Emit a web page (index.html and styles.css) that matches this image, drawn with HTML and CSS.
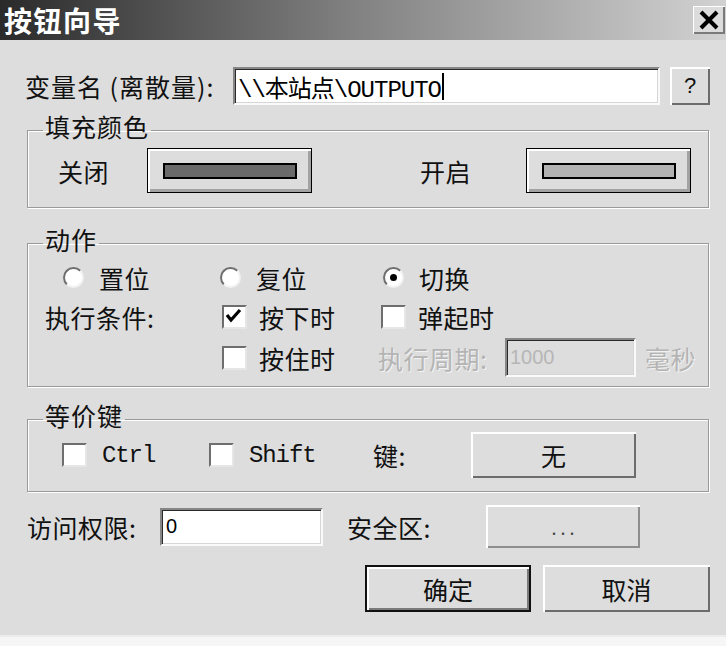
FILE: index.html
```html
<!DOCTYPE html>
<html lang="zh-CN">
<head>
<meta charset="utf-8">
<title>按钮向导</title>
<link rel="stylesheet" href="styles.css">
</head>
<body>
<div class="dialog">
  <div class="titlebar">
    <span class="title">按钮向导</span>
    <button class="close" aria-label="关闭">
      <svg width="32" height="28" viewBox="0 0 32 28"><path d="M8 6 L24 22 M24 6 L8 22" stroke="#000" stroke-width="4" fill="none"/></svg>
    </button>
  </div>

  <div class="content">
    <div class="var-row">
      <span class="lbl var-lbl">变量名 (离散量):</span>
      <div class="field var-field">\\本站点\OUTPUTO<span class="caret"></span></div>
      <button class="btn help">?</button>
    </div>

    <fieldset class="group">
      <legend>填充颜色</legend>
      <div class="fill-row">
        <span class="lbl off-lbl">关闭</span>
        <button class="swatch-btn"><span class="swatch dark"></span></button>
        <span class="lbl on-lbl">开启</span>
        <button class="swatch-btn"><span class="swatch light"></span></button>
      </div>
    </fieldset>

    <fieldset class="group g-action">
      <legend>动作</legend>
      <div class="action-grid">
        <span class="opt ml18"><span class="radio"></span><span class="lbl">置位</span></span>
        <span class="opt"><span class="radio"></span><span class="lbl">复位</span></span>
        <span class="opt span3 ml5"><span class="radio on"><span class="dot"></span></span><span class="lbl">切换</span></span>

        <span class="lbl">执行条件:</span>
        <span class="opt ml2"><span class="chk"><svg width="21" height="20" viewBox="0 0 21 20"><polyline points="3,8 7,13 16,3" stroke="#000" stroke-width="3.2" fill="none"/></svg></span><span class="lbl">按下时</span></span>
        <span class="opt span3 ml3"><span class="chk"></span><span class="lbl">弹起时</span></span>

        <span></span>
        <span class="opt ml2"><span class="chk"></span><span class="lbl">按住时</span></span>
        <span class="lbl disabled">执行周期:</span>
        <div class="field period">1000</div>
        <span class="lbl disabled">毫秒</span>
      </div>
    </fieldset>

    <fieldset class="group g-keys">
      <legend>等价键</legend>
      <div class="key-row">
        <span class="opt key-ctrl"><span class="chk"></span><span class="mono">Ctrl</span></span>
        <span class="opt key-shift"><span class="chk"></span><span class="mono">Shift</span></span>
        <span class="lbl key-lbl">键:</span>
        <button class="btn key-btn">无</button>
      </div>
    </fieldset>

    <div class="access-row">
      <span class="lbl access-lbl">访问权限:</span>
      <div class="field access-field">0</div>
      <span class="lbl zone-lbl">安全区:</span>
      <button class="btn zone-btn">. . .</button>
    </div>

    <div class="actions">
      <button class="btn default">确定</button>
      <button class="btn cancel">取消</button>
    </div>
  </div>
</div>
</body>
</html>
```

FILE: styles.css
```css
html, body {
  margin: 0;
  padding: 0;
  background: #f6f6f6;
}
body {
  width: 726px;
  height: 646px;
  overflow: hidden;
  font-family: "Noto Sans CJK SC", sans-serif;
  color: #111;
}
.dialog {
  height: 635px;
  border-bottom: 2px solid #ececec;
  background: #dddddd;
}
.titlebar {
  height: 40px;
  display: flex;
  align-items: center;
  justify-content: space-between;
  background: linear-gradient(to right, #2a2a2a 0%, #808080 48%, #d2d2d2 100%);
}
.title {
  color: #fff;
  font-size: 28px;
  font-weight: 700;
  letter-spacing: 1.5px;
  line-height: 40px;
  padding-left: 4px;
}
.close {
  width: 32px;
  height: 28px;
  margin-right: 1px;
  padding: 0;
  border: none;
  background: #dcdcdc;
  box-shadow: inset 1px 1px 0 #fff, inset -2px -2px 0 #7a7a7a;
  display: flex;
}
.content {
  padding: 27px 16px 0 25px;
}
.lbl {
  font-size: 25px;
  line-height: 26px;
  white-space: nowrap;
  letter-spacing: 0.5px;
}
.disabled {
  color: #b4b4b4;
  text-shadow: 1px 1px 0 #f2f2f2;
}
.field {
  box-sizing: border-box;
  background: #fff;
  border: 2px solid;
  border-color: #868686 #fafafa #fafafa #868686;
  box-shadow: inset 1px 1px 0 #2a2a2a, inset -1px -1px 0 #d6d6d6;
  display: flex;
  align-items: center;
  padding-left: 4px;
}
.btn {
  box-sizing: border-box;
  padding: 0;
  border: none;
  background: #dddddd;
  box-shadow: inset 2px 2px 0 #fff, inset -2px -2px 0 #6c6c6c;
  font-family: "Noto Sans CJK SC", sans-serif;
  font-size: 25px;
  color: #111;
}

/* row 1 */
.var-row {
  display: flex;
  align-items: center;
  height: 38px;
}
.var-lbl {
  width: 208px;
  letter-spacing: 1px;
}
.var-field {
  width: 427px;
  height: 38px;
  font-family: "Liberation Mono", "Noto Sans CJK SC", monospace;
  font-size: 24px;
  letter-spacing: -1px;
  padding-left: 3px;
  color: #000;
}
.caret {
  display: inline-block;
  width: 2px;
  height: 27px;
  background: #000;
  margin-left: 1px;
}
.help {
  width: 40px;
  height: 38px;
  margin-left: 10px;
  font-family: "Liberation Sans", sans-serif;
  font-size: 22px;
}

/* group boxes */
.group {
  margin: 8px 1px 0 2px;
  padding: 0;
  min-width: 0;
  border: 1px solid #9a9a9a;
  box-shadow: 1px 1px 0 #fff, inset 1px 1px 0 #fff;
}
.group legend {
  margin-left: 15px;
  padding: 0 2px 8px;
  font-size: 25px;
  line-height: 26px;
  letter-spacing: 1px;
}
.fill-row {
  display: flex;
  align-items: center;
  height: 45px;
  margin: 1px 0 14px;
  padding-left: 30px;
}
.off-lbl {
  width: 89px;
}
.on-lbl {
  width: 106px;
  margin-left: 108px;
}
.swatch-btn {
  box-sizing: border-box;
  width: 165px;
  height: 45px;
  padding: 0;
  background: #dddddd;
  border: 1px solid #000;
  box-shadow: inset 2px 2px 0 #fff, inset -3px -3px 0 #a2a2a2;
  display: flex;
  align-items: center;
  justify-content: center;
}
.swatch {
  box-sizing: border-box;
  display: block;
  width: 134px;
  height: 16px;
  border: 2px solid #000;
}
.swatch.dark { background: #6a6a6a; }
.swatch.light { background: #b2b2b2; }

/* action group */
.g-action {
  margin-top: 18px;
}
.action-grid {
  display: grid;
  grid-template-columns: 175px 158px 127px 140px auto;
  grid-template-rows: 35px 43px 39px;
  align-items: center;
  padding-left: 17px;
  margin-bottom: 9px;
}
.opt {
  display: flex;
  align-items: center;
}
.span3 { grid-column: span 3; }
.ml18 { margin-left: 18px; }
.ml5 { margin-left: 5px; }
.ml3 { margin-left: 3px; }
.ml2 { margin-left: 2px; }
.radio {
  box-sizing: border-box;
  width: 21px;
  height: 21px;
  border-radius: 50%;
  background: #fff;
  border: 2px solid;
  border-color: #6e6e6e #f2f2f2 #f2f2f2 #6e6e6e;
  display: flex;
  align-items: center;
  justify-content: center;
  margin-right: 15px;
}
.dot {
  width: 7px;
  height: 7px;
  border-radius: 50%;
  background: #000;
}
.chk {
  box-sizing: border-box;
  width: 25px;
  height: 24px;
  background: #fff;
  border: 2px solid;
  border-color: #6e6e6e #e6e6e6 #e6e6e6 #6e6e6e;
  margin-right: 12px;
  display: flex;
}
.period {
  width: 131px;
  height: 39px;
  background: #dddddd;
  font-family: "Liberation Sans", sans-serif;
  font-size: 20px;
  color: #b6b6b6;
  padding-left: 3px;
}

/* keys group */
.g-keys {
  margin-top: 15px;
}
.key-row {
  display: flex;
  align-items: center;
  height: 46px;
  margin: -4px 0 13px;
  padding-left: 34px;
}
.key-row .chk {
  margin-right: 15px;
}
.key-ctrl { width: 147px; }
.key-shift { width: 164px; }
.mono {
  font-family: "Liberation Mono", monospace;
  font-size: 24px;
  letter-spacing: -1.1px;
}
.key-lbl {
  width: 98px;
}
.key-btn {
  width: 165px;
  height: 46px;
}

/* access row */
.access-row {
  display: flex;
  align-items: center;
  height: 43px;
  margin-top: 13px;
}
.access-lbl {
  width: 133px;
  margin-left: 2px;
}
.access-field {
  width: 163px;
  height: 38px;
  font-family: "Liberation Sans", sans-serif;
  font-size: 20px;
  color: #000;
  padding-left: 4px;
}
.zone-lbl {
  width: 139px;
  margin-left: 24px;
}
.zone-btn {
  width: 154px;
  height: 43px;
  font-size: 18px;
  color: #444;
  box-shadow: inset 2px 2px 0 #fff, inset -2px -2px 0 #8e8e8e;
}

/* bottom buttons */
.actions {
  display: flex;
  justify-content: flex-end;
  gap: 12px;
  margin-top: 17px;
}
.default {
  width: 166px;
  height: 47px;
  border: 2px solid #111;
  box-shadow: inset 2px 2px 0 #fff, inset -2px -2px 0 #7a7a7a;
}
.cancel {
  width: 167px;
  height: 47px;
}
```
